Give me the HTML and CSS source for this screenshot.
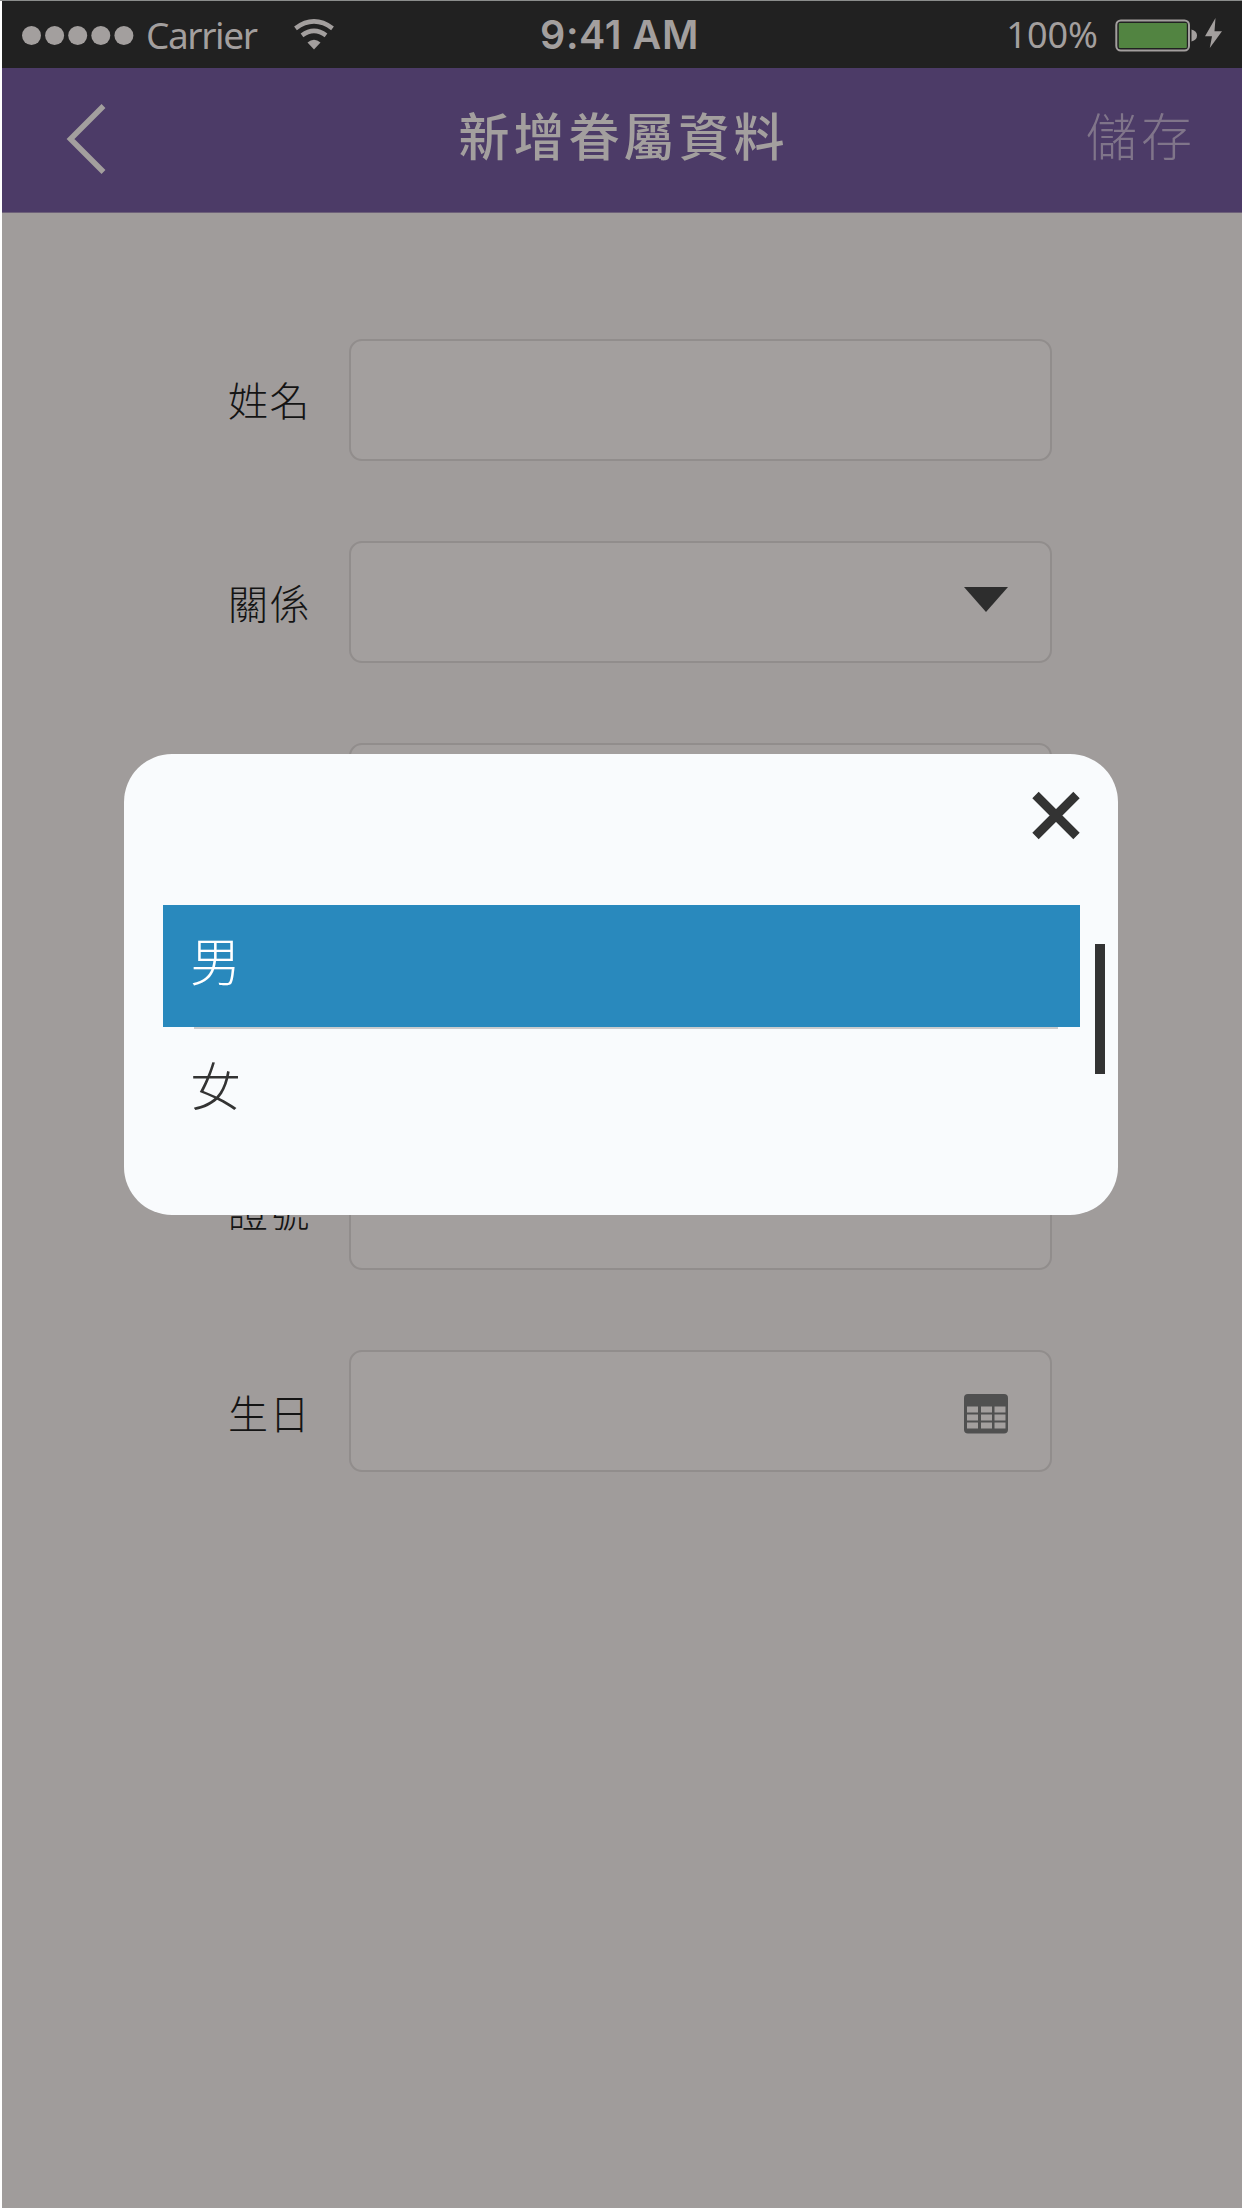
FILE: index.html
```html
<!DOCTYPE html>
<html lang="zh-Hant">
<head>
<meta charset="utf-8">
<title>新增眷屬資料</title>
<link rel="stylesheet" href="styles.css">
</head>
<body>
<div class="screen">
  <header class="status">
    <div class="status-left">
      <svg class="signal" width="112" height="20" viewBox="0 0 112 20"><circle cx="9.5" cy="10.500" r="9.5"/><circle cx="32.6" cy="10.500" r="9.5"/><circle cx="55.7" cy="10.500" r="9.5"/><circle cx="78.8" cy="10.500" r="9.5"/><circle cx="101.9" cy="10.500" r="9.5"/></svg>
      <span class="carrier">Carrier</span>
      <svg class="wifi" width="40" height="31" viewBox="0 0 40 31"><path d="M1.500 9.300Q20 -4.500 38.500 9.300"/><path d="M8 16.300Q20 7.500 32 16.300"/><path class="solid" d="M13.500 23.500Q20 18 26.500 23.500L20 30.500Z"/></svg>
    </div>
    <span class="time">9:41 AM</span>
    <div class="status-right">
      <span class="percent">100%</span>
      <svg class="battery" width="108" height="34" viewBox="0 0 108 34"><rect class="shell" x="2.300" y="2.500" width="72.700" height="30" rx="4.500"/><rect class="charge" x="4.800" y="5" width="68" height="25" rx="1"/><path d="M77.500 11.500Q83 13 83 17.500T77.500 23.500Z"/><path d="M101.500 0L91 18.300H98L95.800 30L108 13.200H100.500Z"/></svg>
    </div>
  </header>
  <nav class="nav">
    <svg class="back" width="40" height="72" viewBox="0 0 40 72"><path d="M37.500 2L4.500 35L37.500 68"/></svg>
    <h1 class="title">新增眷屬資料</h1>
    <span class="save">儲存</span>
  </nav>
  <main class="form">
    <div class="row"><span class="label raised">姓名</span><div class="field"></div></div>
    <div class="row"><span class="label">關係</span><div class="field"><svg class="caret" width="44" height="25" viewBox="0 0 44 25"><path d="M0 0H44L22 25Z"/></svg></div></div>
    <div class="row"><span class="label">性別</span><div class="field"></div></div>
    <div class="row"><span class="label lowered">證號</span><div class="field"></div></div>
    <div class="row"><span class="label lowered">生日</span><div class="field"><svg class="calendar" width="44" height="40" viewBox="0 0 44 40"><path fill-rule="evenodd" d="M4 0H40Q44 0 44 4V35.500Q44 39.500 40 39.500H4Q0 39.500 0 35.500V4Q0 0 4 0ZM3 12.500V18.500H14V12.500ZM17 12.500V18.500H28V12.500ZM30.500 12.500V18.500H41.500V12.500ZM3 20.500V26.500H14V20.500ZM17 20.500V26.500H28V20.500ZM30.500 20.500V26.500H41.500V20.500ZM3 28.500V34.500H14V28.500ZM17 28.500V34.500H28V28.500ZM30.500 28.500V34.500H41.500V28.500Z"/></svg></div></div>
  </main>
  <section class="dialog">
    <svg class="close" width="48" height="50" viewBox="0 0 48 50"><path d="M3.500 5L44.500 46M44.500 5L3.500 46"/></svg>
    <ul class="options">
      <li class="option selected">男</li>
      <li class="option">女</li>
    </ul>
    <div class="scrollbar"></div>
  </section>
</div>
</body>
</html>
```
FILE: styles.css
```css
* { box-sizing: border-box; }
body {
  margin: 0;
  background: #fff;
  font-family: "Noto Sans CJK TC", sans-serif;
}
.screen {
  position: relative;
  height: 2208px;
  padding-left: 2px;
  background: #a09c9b;
  border-top: 1px solid #8b8d8c;
  background-clip: content-box;
  overflow: hidden;
}
.status {
  display: grid;
  grid-template-columns: 1fr auto 1fr;
  align-items: center;
  height: 67px;
  padding-bottom: 2px;
  background: #212121;
  color: #a39f9e;
  fill: #a39f9e;
}
.status-left, .status-right {
  display: flex;
  align-items: center;
}
.status-left { padding-left: 20px; }
.status-right { justify-content: flex-end; padding-right: 20px; }
.carrier {
  width: 110px;
  margin-left: 12px;
  font: 37px/65px "Noto Sans", sans-serif;
  letter-spacing: -1.400px;
}
.wifi { margin: 0 0 0 38px; fill: none; stroke: #a39f9e; stroke-width: 4.6; }
.wifi .solid { fill: #a39f9e; stroke: none; }
.time {
  margin: 2px 5px 0 0;
  font: 600 39.500px/65px Inter, sans-serif;
  letter-spacing: 0.600px;
}
.percent { margin-right: 16px; font: 36px/65px "Noto Sans", sans-serif; }
.battery .shell { fill: none; stroke: #a39f9e; stroke-width: 2; }
.battery .charge { fill: #528441; }
.nav {
  display: grid;
  grid-template-columns: 1fr auto 1fr;
  align-items: center;
  height: 145px;
  padding: 0 46px 0 64px;
  background: #4c3b67;
  border-bottom: 1px solid #6d6079;
}
.back { fill: none; stroke: #a39f9e; stroke-width: 5.5; }
.title {
  margin: 0 15px 13px 0;
  color: #a39f9e;
  font-size: 51px;
  font-weight: 500;
  letter-spacing: 4px;
}
.save {
  justify-self: end;
  margin-bottom: 13px;
  color: #80758a;
  font-size: 51px;
  font-weight: 300;
  letter-spacing: 4px;
}
.form {
  display: flex;
  flex-direction: column;
  gap: 80.300px;
  padding: 125.500px 0 0 226px;
}
.row { display: flex; align-items: center; height: 122px; }
.row:nth-child(4) { margin-top: 202.500px; }
.label {
  width: 121px;
  color: #141414;
  font-size: 40px;
  font-weight: 300;
  letter-spacing: 1.500px;
}
.raised { padding-bottom: 2px; }
.lowered { padding-top: 2px; }
.field {
  display: flex;
  justify-content: flex-end;
  align-items: center;
  width: 703px;
  height: 122px;
  padding-right: 42px;
  border: 2px solid #918d8c;
  border-radius: 13px;
  background: #a39f9e;
}
.caret { margin-bottom: 4px; fill: #2d2d2d; }
.calendar { margin-top: 5px; fill: #505050; }
.dialog {
  position: absolute;
  left: 124px;
  top: 753px;
  display: flex;
  flex-direction: column;
  width: 994px;
  height: 460.500px;
  padding: 36px 38px 36px 39px;
  border-radius: 48px;
  background: #f9fbfd;
}
.close { align-self: flex-end; fill: none; stroke: #333; stroke-width: 9; }
.options { margin: 65px 0 0; padding: 0; list-style: none; }
.option {
  height: 124px;
  padding-left: 27px;
  color: #333;
  font-size: 51px;
  font-weight: 300;
  line-height: 115px;
}
.selected {
  height: 122px;
  background: #2989bd;
  color: #fff;
  line-height: 109px;
}
.selected::after {
  content: "";
  display: block;
  width: 864px;
  height: 2px;
  margin: 13px 0 0 4px;
  background: #c9cbcd;
}
.scrollbar {
  position: absolute;
  left: 971px;
  top: 190px;
  width: 10px;
  height: 130px;
  background: #333;
}
```
